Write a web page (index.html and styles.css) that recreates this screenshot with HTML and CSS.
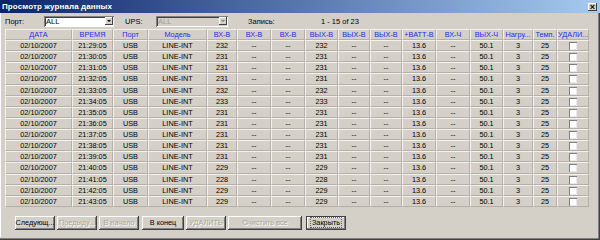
FILE: index.html
```html
<!DOCTYPE html>
<html lang="ru">
<head>
    <meta charset="UTF-8">
    <title>Просмотр журнала данных</title>
    <link rel="stylesheet" href="styles.css">
</head>
<body>
    <div class="window">
        <div class="title-bar">
            <span class="title">Просмотр журнала данных</span>
            <span class="close-btn">&#215;</span>
        </div>
        <div class="toolbar">
            <span class="lbl lbl-port">Порт:</span>
            <div class="combo combo-port"><span class="combo-text">ALL</span><span class="combo-drop"><span class="arrow"></span></span></div>
            <span class="lbl lbl-ups">UPS:</span>
            <div class="combo combo-ups disabled"><span class="combo-text">ALL</span><span class="combo-drop"><span class="arrow"></span></span></div>
            <span class="lbl lbl-rec">Запись:</span>
            <span class="lbl lbl-count">1 - 15 of 23</span>
        </div>
        <table class="log-table">
            <colgroup>
                <col style="width:67px"><col style="width:41px"><col style="width:35px"><col style="width:59px">
                <col style="width:30px"><col style="width:34px"><col style="width:34px"><col style="width:33px">
                <col style="width:32px"><col style="width:32px"><col style="width:34px"><col style="width:34px">
                <col style="width:33px"><col style="width:30px"><col style="width:24px"><col style="width:32px">
            </colgroup>
            <thead>
                <tr>
                    <th>ДАТА</th><th>ВРЕМЯ</th><th>Порт</th><th>Модель</th>
                    <th>ВХ-В</th><th>ВХ-В</th><th>ВХ-В</th><th>ВЫХ-В</th>
                    <th>ВЫХ-В</th><th>ВЫХ-В</th><th>+ВАТТ-В</th><th>ВХ-Ч</th>
                    <th>ВЫХ-Ч</th><th>Нагру...</th><th>Темп.</th><th>УДАЛИ...</th>
                </tr>
            </thead>
            <tbody id="rows"></tbody>
        </table>
        <div class="buttons">
            <button class="btn">Следующ...</button>
            <button class="btn" disabled>Предыду...</button>
            <button class="btn" disabled>В начало</button>
            <button class="btn btn-wide">В конец</button>
            <button class="btn" disabled>УДАЛИТЬ</button>
            <button class="btn btn-clear" disabled>Очистить все</button>
            <button class="btn btn-default"><span class="focus">Закрыть</span></button>
        </div>
    </div>
    <script>
const volts = [232, 231, 231, 231, 232, 233, 231, 231, 231, 231, 231, 229, 228, 229, 229];
const tbody = document.getElementById('rows');

volts.forEach(function(v, i) {
    const min = 29 + i;
    const cells = ['02/10/2007', '21:' + min + ':05', 'USB', 'LINE-INT', v, '--', '--', v, '--', '--', '13.6', '--', '50.1', '3', '25'];
    const tr = document.createElement('tr');
    cells.forEach(function(c) {
        const td = document.createElement('td');
        td.textContent = c;
        tr.appendChild(td);
    });
    const last = document.createElement('td');
    last.innerHTML = '<span class="chk"></span>';
    tr.appendChild(last);
    tbody.appendChild(tr);
});
</script>
</body>
</html>
```

FILE: styles.css
```css
body {
    margin: 0;
    padding: 0;
    background: #d4d0c8;
    font-family: "Liberation Sans", Arial, sans-serif;
}
.window {
    width: 600px;
    height: 240px;
    box-sizing: border-box;
    background: #d4d0c8;
    box-shadow: inset -1px -1px #404040, inset -2px -2px #808080, inset -3px -3px #d4d0c8, inset 1px 0 #ffffff;
    display: flex;
    flex-direction: column;
    overflow: hidden;
}
.title-bar {
    height: 13px;
    background: linear-gradient(to right, #0a246a, #a6caf0);
    display: flex;
    align-items: center;
    justify-content: space-between;
    padding: 0 3px 0 2px;
}
.title {
    color: #fff;
    font-weight: bold;
    font-size: 8px;
    letter-spacing: 0.1px;
}
.close-btn {
    width: 9px;
    height: 8px;
    background: #d4d0c8;
    box-shadow: inset -1px -1px #404040, inset 1px 1px #ffffff;
    font-size: 9px;
    line-height: 8px;
    text-align: center;
    color: #000;
    font-weight: bold;
}
.toolbar {
    height: 16px;
    display: flex;
    align-items: center;
    padding-left: 5px;
    font-size: 7.5px;
}
.lbl-port { width: 39px; }
.lbl-ups { margin-left: 11px; width: 31px; }
.lbl-rec { margin-left: 20px; width: 73px; }
.combo {
    height: 11px;
    box-sizing: border-box;
    background: #fff;
    box-shadow: inset 1px 1px #808080, inset -1px -1px #ffffff, inset 2px 2px #404040;
    display: flex;
    align-items: center;
    justify-content: space-between;
    padding: 1px 1px 1px 2px;
}
.combo-port { width: 70px; }
.combo-ups { width: 72px; }
.combo.disabled { background: #d4d0c8; }
.combo.disabled .combo-text { color: #a09c94; }
.combo-text { font-size: 7.5px; }
.combo-drop {
    width: 8px;
    height: 8px;
    background: #d4d0c8;
    box-shadow: inset -1px -1px #404040, inset 1px 1px #ffffff;
    display: flex;
    align-items: center;
    justify-content: center;
}
.arrow {
    border-left: 2px solid transparent;
    border-right: 2px solid transparent;
    border-top: 2px solid #000;
}
.combo.disabled .arrow { border-top-color: #808080; }
.log-table {
    margin-left: 5px;
    width: 584px;
    table-layout: fixed;
    border-collapse: separate;
    border-spacing: 0;
    font-size: 7.3px;
}
.log-table th, .log-table td {
    padding: 0;
    text-align: center;
    white-space: nowrap;
    overflow: hidden;
    box-sizing: border-box;
    border-top: 1px solid #f2f1ec;
    border-left: 1px solid #f2f1ec;
    border-right: 1px solid #b4b0a8;
    border-bottom: 1px solid #b4b0a8;
    background: #d4d0c8;
}
.log-table th {
    height: 11px;
    font-weight: normal;
    color: #1e2ee8;
}
.log-table td {
    height: 11.13px;
    color: #000;
}
.chk {
    display: inline-block;
    width: 8px;
    height: 8px;
    background: #fff;
    box-sizing: border-box;
    box-shadow: inset 1px 1px #808080, inset -1px -1px #e8e8e8;
    vertical-align: middle;
}
.buttons {
    display: flex;
    gap: 2px;
    padding: 9px 0 0 15px;
}
.btn {
    width: 40px;
    height: 14px;
    padding: 0;
    font-family: "Liberation Sans", Arial, sans-serif;
    font-size: 7.3px;
    color: #000;
    background: #d4d0c8;
    border: none;
    box-shadow: inset -1px -1px #404040, inset 1px 1px #ffffff, inset -2px -2px #808080;
    white-space: nowrap;
    overflow: hidden;
}
.btn:disabled {
    color: #a8a49c;
    text-shadow: 1px 1px #ffffff;
}
.btn-wide { width: 42px; margin-left: 1px; }
.btn-clear { width: 74px; }
.btn-default {
    width: 40px;
    margin-left: 2px;
    box-shadow: inset 0 0 0 1px #404040, inset -2px -2px #808080, inset 2px 2px #ffffff;
}
.focus {
    display: inline-block;
    padding: 0 1px;
    outline: 1px dotted #606060;
}
```
